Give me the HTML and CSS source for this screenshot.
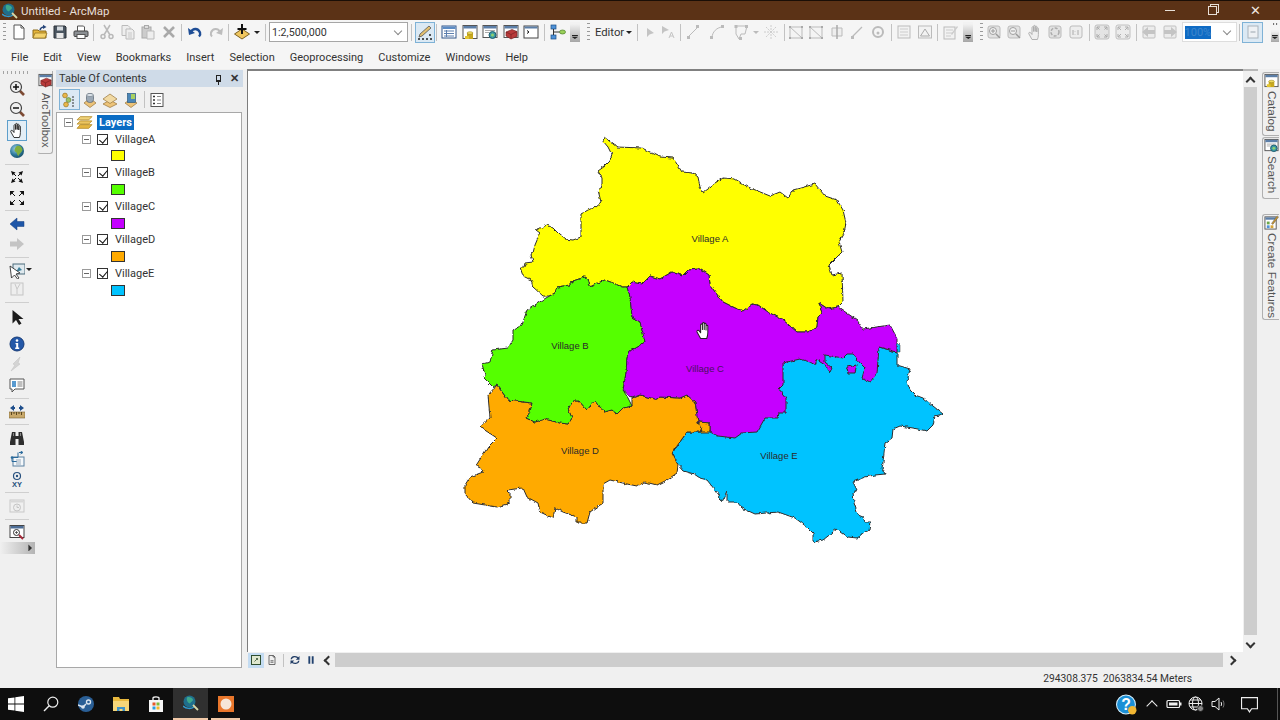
FILE: index.html
```html
<!DOCTYPE html>
<html lang="en">
<head>
<meta charset="utf-8">
<title>Untitled - ArcMap</title>
<link rel="stylesheet" href="styles.css">
</head>
<body>
<svg class="defs" width="0" height="0" aria-hidden="true">
<defs>
<filter id="rough" x="-5%" y="-5%" width="110%" height="110%"><feTurbulence type="fractalNoise" baseFrequency=".22" numOctaves="2" seed="4" result="n"/><feDisplacementMap in="SourceGraphic" in2="n" scale="3.5" xChannelSelector="R" yChannelSelector="G"/></filter>
<radialGradient id="gGlobe" cx=".4" cy=".35" r=".7"><stop offset="0" stop-color="#9fd0e8"/><stop offset=".6" stop-color="#2d7a9c"/><stop offset="1" stop-color="#174d66"/></radialGradient>
<symbol id="new" viewBox="0 0 16 16"><path d="M3 1h7l3 3v11H3z" fill="#fff" stroke="#555"/><path d="M10 1v3h3" fill="none" stroke="#555"/></symbol>
<symbol id="open" viewBox="0 0 16 16"><path d="M1 6h5l1 1h7v7H1z" fill="#e6b53a" stroke="#8a6a1a"/><path d="M1 14l2-5h12l-2 5z" fill="#f4d36c" stroke="#8a6a1a" stroke-width=".7"/><path d="M8 6c.5-2 2-3 4-3" fill="none" stroke="#27467a" stroke-width="1.4"/><path d="M11 .8l3.5 2.2-3.5 2z" fill="#27467a"/></symbol>
<symbol id="save" viewBox="0 0 16 16"><path d="M2 2h11l1 1v11H2z" fill="#4a5560" stroke="#2c3238"/><rect x="5" y="2.500" width="6" height="4" fill="#d5dbe0"/><rect x="4.500" y="9" width="7" height="5" fill="#e8e8e8"/></symbol>
<symbol id="print" viewBox="0 0 16 16"><path d="M4.500 7V2h6l1 1v4" fill="#fff" stroke="#555"/><rect x="1" y="7" width="14" height="5.500" rx="1" fill="#8b8f93" stroke="#444"/><rect x="4" y="10.500" width="8" height="4" fill="#fff" stroke="#555"/></symbol>
<symbol id="cut" viewBox="0 0 16 16"><g fill="none" stroke="#b9b9b9" stroke-width="1.500"><circle cx="4" cy="12.500" r="2"/><circle cx="12" cy="12.500" r="2"/><path d="M5 11l6-10M11 11L5 1"/></g></symbol>
<symbol id="copy" viewBox="0 0 16 16"><g fill="#eee" stroke="#bbb"><path d="M2 1.500h6l2 2v8H2z"/><path d="M6 5h6l2 2v8H6z"/></g><path d="M8 9h4M8 11h4M8 13h4" stroke="#c8c8c8"/></symbol>
<symbol id="paste" viewBox="0 0 16 16"><rect x="2" y="3" width="9" height="11" fill="#ccc" stroke="#aaa"/><rect x="4.500" y="1.500" width="4" height="3" fill="#ddd" stroke="#aaa"/><path d="M7 7h7v8H7z" fill="#eee" stroke="#bbb"/></symbol>
<symbol id="del" viewBox="0 0 16 16"><path d="M3 3l10 10M13 3L3 13" stroke="#a9a9a9" stroke-width="2.600"/></symbol>
<symbol id="undo" viewBox="0 0 16 16"><path d="M4 8c2-4 7-4 9 .5 .5 1.500 0 3-1 4" fill="none" stroke="#1f4e96" stroke-width="2.400"/><path d="M1 4l1 7 6-2z" fill="#1f4e96"/></symbol>
<symbol id="redo" viewBox="0 0 16 16"><path d="M12 8c-2-4-7-4-9 .5-.5 1.500 0 3 1 4" fill="none" stroke="#bdbdbd" stroke-width="2"/><path d="M15 4l-1 7-6-2z" fill="#bdbdbd"/></symbol>
<symbol id="add" viewBox="0 0 16 16"><path d="M8 5l7.500 5L8 15 .5 10z" fill="#efc65f" stroke="#7d6020"/><path d="M8 0v10M3.500 5h9" stroke="#111" stroke-width="2"/></symbol>
<symbol id="edit" viewBox="0 0 16 16"><path d="M3 10l9-8 2 2-9 8-3 1z" fill="#e3c070" stroke="#555" stroke-width=".8"/><path d="M1 15h2M5 15h2M9 15h2M13 15h2M12 11h2" stroke="#222" stroke-width="1.600"/></symbol>
<symbol id="table" viewBox="0 0 16 16"><rect x="1" y="2" width="14" height="12" fill="#fff" stroke="#33578a"/><rect x="1.500" y="2.500" width="13" height="2.500" fill="#5d8cc4"/><path d="M3 7h10M3 9.500h10M3 12h10M5.500 6v7" stroke="#5d7fae"/></symbol>
<symbol id="catalog" viewBox="0 0 16 16"><rect x="1" y="1.500" width="14" height="13" fill="#fff" stroke="#555"/><rect x="1.500" y="2" width="13" height="2.500" fill="#5c7fa8"/><path d="M5 9h6v6H5z" fill="#c8a81e"/><ellipse cx="8" cy="9" rx="3" ry="1.300" fill="#f0dc5c" stroke="#8a7414" stroke-width=".5"/><path d="M3 12h4v3H3z" fill="#e2c530"/></symbol>
<symbol id="search" viewBox="0 0 16 16"><rect x="1" y="1.500" width="14" height="12" fill="#fff" stroke="#555"/><rect x="1.500" y="2" width="13" height="2.500" fill="#5c7fa8"/><path d="M3 6.500h10M3 8.500h4" stroke="#aaa"/><circle cx="10.500" cy="11" r="3.500" fill="#3c9aa4" stroke="#1d5c70"/><circle cx="10.500" cy="11" r="1.500" fill="#8fd16e"/></symbol>
<symbol id="toolbox" viewBox="0 0 16 16"><rect x="1" y="1.500" width="14" height="12" fill="#fff" stroke="#555"/><rect x="1.500" y="2" width="13" height="2.500" fill="#5c7fa8"/><path d="M3 8l6-2.500 5 2v5l-6 2.500-5-3z" fill="#b83a3a" stroke="#6e1f1f" stroke-width=".6"/><path d="M3 8l5 2.500 6-3M8 10.500V15" fill="none" stroke="#6e1f1f" stroke-width=".6"/></symbol>
<symbol id="python" viewBox="0 0 16 16"><rect x="1" y="2" width="14" height="12" fill="#fff" stroke="#444"/><rect x="1.500" y="2.500" width="13" height="2" fill="#5c7fa8"/><path d="M4 6.500l2 1.500-2 1.500" fill="none" stroke="#111"/></symbol>
<symbol id="model" viewBox="0 0 16 16"><rect x="1" y="1" width="5" height="4" fill="#4f92d8" stroke="#1c4f86" stroke-width=".7"/><rect x="1" y="11" width="5" height="4" fill="#4f92d8" stroke="#1c4f86" stroke-width=".7"/><ellipse cx="12.500" cy="8" rx="3" ry="2" fill="#9ad05a" stroke="#4c7f28" stroke-width=".7"/><path d="M3.500 5v6M3.500 8h6" stroke="#333"/></symbol>
<symbol id="earrow" viewBox="0 0 16 16"><path d="M5 4v9l2.500-2.500L12 9z" fill="#c4c4c4"/></symbol>
<symbol id="earrowa" viewBox="0 0 16 16"><path d="M1 2v8l2.500-2.500L8 6z" fill="#c4c4c4"/><path d="M8 14l2.500-6 2.500 6M9 12h3" fill="none" stroke="#c4c4c4"/></symbol>
<symbol id="sketch" viewBox="0 0 16 16"><path d="M3 13L13 3" stroke="#bbb"/><path d="M2 12h3v3H2zM11 1h3v3h-3z" fill="#bbb"/></symbol>
<symbol id="curve" viewBox="0 0 16 16"><path d="M3 14C3 8 8 3 14 3" fill="none" stroke="#bbb"/><path d="M1 12h3v3H1zM12 1h3v3h-3z" fill="#bbb"/></symbol>
<symbol id="poly" viewBox="0 0 16 16"><path d="M3 2h11l-2 8H8l-2 5-3-5z" fill="none" stroke="#bbb"/><path d="M1.500 1h3v3h-3zM12 1h3v3h-3zM6 13h3v3H6z" fill="#bbb"/></symbol>
<symbol id="star" viewBox="0 0 16 16"><path d="M8 1v14M1 8h14M3 3l10 10M13 3L3 13" stroke="#ccc" stroke-dasharray="2 1"/></symbol>
<symbol id="rect" viewBox="0 0 16 16"><path d="M2 3h12v11H2zM2 3l12 11" fill="#f4f4f4" stroke="#bbb"/><path d="M1 2h2v2H1zM13 2h2v2h-2zM1 13h2v2H1zM13 13h2v2h-2z" fill="#aaa"/></symbol>
<symbol id="cross" viewBox="0 0 16 16"><path d="M3 4h10v8H3z" fill="#eee" stroke="#bbb"/><path d="M8 1v14" stroke="#aaa" stroke-width="1.500"/></symbol>
<symbol id="slash" viewBox="0 0 16 16"><path d="M3 13L13 3" stroke="#bbb" stroke-width="1.300"/><path d="M2 12h3v3H2z" fill="#bbb"/></symbol>
<symbol id="rot" viewBox="0 0 16 16"><circle cx="8" cy="8" r="5" fill="none" stroke="#bbb" stroke-width="2"/><circle cx="8" cy="9" r="1.500" fill="#bbb"/></symbol>
<symbol id="attr" viewBox="0 0 16 16"><rect x="2" y="2" width="12" height="12" fill="#f2f2f2" stroke="#bbb"/><path d="M4 5h8M4 8h8M4 11h8" stroke="#ccc"/></symbol>
<symbol id="pyr" viewBox="0 0 16 16"><rect x="1.500" y="2" width="13" height="12" fill="#f2f2f2" stroke="#bbb"/><path d="M3.500 12L8 5l4.500 7z" fill="none" stroke="#aaa"/></symbol>
<symbol id="note" viewBox="0 0 16 16"><rect x="1" y="3" width="11" height="12" fill="#f2f2f2" stroke="#bbb"/><path d="M3 6h7M3 9h7M3 12h5" stroke="#ccc"/><path d="M8 10l6-8 1 1-6 8z" fill="#ccc"/></symbol>
<symbol id="create" viewBox="0 0 16 16"><rect x="1" y="2" width="12" height="13" fill="#fff" stroke="#555"/><rect x="1.500" y="2.500" width="11" height="2.500" fill="#5c7fa8"/><path d="M3 7h3v3H3z" fill="#6ba84a"/><path d="M7 11h3v3H7z" fill="#d6a53a"/><path d="M3 11h3v3H3z" fill="#4f92d8"/><path d="M8 9l6-8 1.500 1-6 8z" fill="#c9962f" stroke="#555" stroke-width=".5"/></symbol>
<symbol id="layin" viewBox="0 0 16 16"><rect x="2" y="2" width="12" height="12" rx="2" fill="#e2e2e2" stroke="#bbb"/><circle cx="7" cy="7" r="3.500" fill="#f2f2f2" stroke="#a0a0a0"/><path d="M5 7h4M7 5v4" stroke="#999"/><path d="M10 10l4 4" stroke="#999" stroke-width="1.500"/></symbol>
<symbol id="layout" viewBox="0 0 16 16"><rect x="2" y="2" width="12" height="12" rx="2" fill="#e2e2e2" stroke="#bbb"/><circle cx="7" cy="7" r="3.500" fill="#f2f2f2" stroke="#a0a0a0"/><path d="M5 7h4" stroke="#999"/><path d="M10 10l4 4" stroke="#999" stroke-width="1.500"/></symbol>
<symbol id="hand" viewBox="0 0 16 16"><path d="M5 15.500L1.800 9.800C1.200 8.600 2.800 7.700 3.700 8.800L5 10.500V3.500C5 2.400 6.600 2.400 6.600 3.500V7.500V2.200C6.600 1.100 8.200 1.100 8.200 2.200V7.500V2.800C8.200 1.700 9.800 1.700 9.800 2.800V8V4.500C9.800 3.500 11.400 3.500 11.400 4.500V10.500C11.400 12.500 11 14 10.400 15.500z" fill="#fff" stroke="#222" stroke-width=".9" stroke-linejoin="round"/></symbol>
<symbol id="handg" viewBox="0 0 16 16"><path d="M5 15.500L1.800 9.800C1.200 8.600 2.800 7.700 3.700 8.800L5 10.500V3.500C5 2.400 6.600 2.400 6.600 3.500V7.500V2.200C6.600 1.100 8.200 1.100 8.200 2.200V7.500V2.800C8.200 1.700 9.800 1.700 9.800 2.800V8V4.500C9.800 3.500 11.400 3.500 11.400 4.500V10.500C11.400 12.500 11 14 10.400 15.500z" fill="#efefef" stroke="#aaa" stroke-width=".9"/></symbol>
<symbol id="rotg" viewBox="0 0 16 16"><rect x="2" y="2" width="12" height="12" rx="2" fill="#e2e2e2" stroke="#bbb"/><circle cx="8" cy="8" r="4" fill="none" stroke="#aaa" stroke-width="1.500" stroke-dasharray="3 1.500"/></symbol>
<symbol id="one" viewBox="0 0 16 16"><rect x="2" y="2" width="12" height="12" rx="2" fill="#ededed" stroke="#bbb"/><path d="M5 6v5M7 7.500v.5M7 10v.5M10 6v5" stroke="#aaa"/></symbol>
<symbol id="fin" viewBox="0 0 16 16"><rect x="1" y="1" width="14" height="14" rx="2" fill="#e4e4e4" stroke="#c0c0c0"/><path d="M3 3l2.500 2.500M3 6V3h3M13 3l-2.500 2.500M13 6V3h-3M3 13l2.500-2.500M3 10v3h3M13 13l-2.500-2.500M13 10v3h-3" fill="none" stroke="#aaa"/></symbol>
<symbol id="fout" viewBox="0 0 16 16"><rect x="1" y="1" width="14" height="14" rx="2" fill="#ececec" stroke="#c0c0c0"/><path d="M6 6L3 3M3 6V3h3M10 6l3-3M13 6V3h-3M6 10l-3 3M3 10v3h3M10 10l3 3M13 10v3h-3" fill="none" stroke="#b0b0b0"/></symbol>
<symbol id="bkg" viewBox="0 0 16 16"><rect x="2" y="2" width="12" height="12" rx="1" fill="#ececec" stroke="#c0c0c0"/><path d="M1 8l6-5v3h7v4H7v3z" fill="#c4c4c4"/></symbol>
<symbol id="fwg" viewBox="0 0 16 16"><rect x="2" y="2" width="12" height="12" rx="1" fill="#ececec" stroke="#c0c0c0"/><path d="M15 8L9 3v3H2v4h7v3z" fill="#c4c4c4"/></symbol>
<symbol id="page" viewBox="0 0 16 16"><rect x="3" y="2" width="10" height="12" fill="#eef1f4" stroke="#a9b3bc"/><path d="M5.500 8h5" stroke="#9aa5ae"/></symbol>
<symbol id="dots" viewBox="0 0 16 16"><path d="M4 2l3 2-3 2zM10 2l3 2-3 2z" fill="#333"/></symbol>
<symbol id="zin" viewBox="0 0 16 16"><path d="M10 10l5 5" stroke="#7d4a33" stroke-width="2.600"/><circle cx="7" cy="7" r="5.500" fill="#efefef" stroke="#444" stroke-width="1.200"/><path d="M4 7h6M7 4v6" stroke="#111" stroke-width="1.500"/></symbol>
<symbol id="zout" viewBox="0 0 16 16"><path d="M10 10l5 5" stroke="#7d4a33" stroke-width="2.600"/><circle cx="7" cy="7" r="5.500" fill="#efefef" stroke="#444" stroke-width="1.200"/><path d="M4 7h6" stroke="#111" stroke-width="1.500"/></symbol>
<symbol id="globe" viewBox="0 0 16 16"><circle cx="8" cy="8" r="7" fill="url(#gGlobe)"/><path d="M8 3c3-1 5 1 5.500 4-1 3-3 3-4 6-2-1-1-3-2.500-4-2 0-2-4 1-6z" fill="#7fae3d"/></symbol>
<symbol id="cin" viewBox="0 0 16 16"><path d="M2 2l4.500 1.500L3.500 6.500zM14 2l-1.500 4.500-3-3zM2 14l1.500-4.500 3 3zM14 14l-4.500-1.500 3-3z" fill="#111"/><path d="M7 7L4 4M9 7l3-3M7 9l-3 3M9 9l3 3" stroke="#111"/></symbol>
<symbol id="cout" viewBox="0 0 16 16"><path d="M1 1h4.500L1 5.500zM15 1v4.500L10.500 1zM1 15v-4.500L5.500 15zM15 15h-4.500L15 10.500z" fill="#111"/><path d="M3 3l3 3M13 3l-3 3M3 13l3-3M13 13l-3-3" stroke="#111"/></symbol>
<symbol id="back" viewBox="0 0 16 16"><path d="M1 8l7-6v3.500h7v5H8V14z" fill="#1e56a8" stroke="#163f7c" stroke-width=".5"/></symbol>
<symbol id="fwd" viewBox="0 0 16 16"><path d="M15 8L8 2v3.500H1v5h7V14z" fill="#c4c4c4"/></symbol>
<symbol id="selel" viewBox="0 0 16 16"><rect x="4" y="1" width="12" height="10" fill="#dfe9ee" stroke="#4a6a7a"/><path d="M7 9l3-5 3 3" fill="#3d7f9a"/><path d="M1 3l1.500 12 3-3 3 4 1.500-1-3-4 4-1z" fill="#fff" stroke="#333" stroke-width=".9"/></symbol>
<symbol id="clr" viewBox="0 0 16 16"><rect x="2" y="2" width="12" height="12" fill="#eee" stroke="#c4c4c4"/><path d="M6 3l2 5 3-5M8 8v5" stroke="#c8c8c8" fill="none"/></symbol>
<symbol id="arrow" viewBox="0 0 16 16"><path d="M3.500 1v13.500l3.500-3.500 3 5 2.500-1.500-3-4.500h5z" fill="#1c1c1c"/></symbol>
<symbol id="info" viewBox="0 0 16 16"><circle cx="8" cy="8" r="7" fill="#2458a8" stroke="#173c78"/><circle cx="8" cy="4.500" r="1.300" fill="#fff"/><path d="M6.500 7h2.700v4.500h1V13h-4v-1.500h1V8.300h-.7z" fill="#fff"/></symbol>
<symbol id="flash" viewBox="0 0 16 16"><path d="M11 1L4 8l2 1-4 6 9-7-2-1z" fill="#d4d4d4" stroke="#c4c4c4" stroke-width=".6"/></symbol>
<symbol id="popup" viewBox="0 0 16 16"><path d="M1 2h14v10H6l-3 3v-3H1z" fill="#fff" stroke="#555"/><rect x="3" y="4" width="4" height="6" fill="#5a9bd0"/><path d="M8.500 5h5M8.500 7h5M8.500 9h5" stroke="#7f7f7f"/></symbol>
<symbol id="measure" viewBox="0 0 16 16"><rect x="0" y="9" width="16" height="6" fill="#c8a86a" stroke="#7a6233" stroke-width=".6"/><path d="M2.500 9v3M5 9v2M7.500 9v3M10 9v2M12.500 9v3" stroke="#5a4620"/><path d="M1 5l4-3v2h1v2H5v2zM15 5l-4-3v2h-1v2h1v2z" fill="#1f4f8c"/></symbol>
<symbol id="find" viewBox="0 0 16 16"><path d="M3 2h3.500v4h3V2H13l2 10v3H9.500V9h-3v6H1v-3z" fill="#2e2e2e"/><path d="M4 3h1v3H4zM11 3h1v3h-1z" fill="#888"/></symbol>
<symbol id="route" viewBox="0 0 16 16"><rect x="4" y="6" width="11" height="9" fill="#f4f8fb" stroke="#5a80a0"/><path d="M10 1.500h3M11.500 0l2.500 1.500L11.500 3M9 1.500v5H3v4h5" fill="none" stroke="#2a6a9c"/><circle cx="3" cy="6.500" r="1.300" fill="#2a6a9c"/><path d="M7 9h5M7 11h5M7 13h5" stroke="#9ab"/></symbol>
<symbol id="goxy" viewBox="0 0 16 16"><circle cx="8" cy="5" r="3.500" fill="none" stroke="#27507e" stroke-width="1.200"/><circle cx="8" cy="5" r="1.200" fill="#27507e"/><text x="8" y="15.500" text-anchor="middle" class="xy">XY</text></symbol>
<symbol id="time" viewBox="0 0 16 16"><rect x="1" y="2" width="14" height="12" fill="#f0f0f0" stroke="#c8c8c8"/><rect x="1.500" y="2.500" width="13" height="2" fill="#d8d8d8"/><circle cx="8" cy="9.500" r="3.500" fill="#eee" stroke="#c4c4c4"/><path d="M8 7.500v2h2" stroke="#c4c4c4" fill="none"/></symbol>
<symbol id="viewer" viewBox="0 0 16 16"><rect x="1" y="1.500" width="14" height="12" fill="#fff" stroke="#444"/><rect x="1.500" y="2" width="13" height="2.500" fill="#4d6d96"/><circle cx="7.500" cy="8.500" r="3" fill="#fff" stroke="#333"/><path d="M6 8.500h3M7.500 7v3" stroke="#333" stroke-width=".7"/><path d="M10 11l4 4" stroke="#a52a3a" stroke-width="2"/></symbol>
<symbol id="tocl" viewBox="0 0 16 16"><circle cx="4" cy="3.500" r="2.400" fill="#e9b64b" stroke="#8a6a1a" stroke-width=".6"/><circle cx="7.500" cy="8" r="2.400" fill="#9cc268" stroke="#587a2c" stroke-width=".6"/><circle cx="5" cy="12.500" r="2.400" fill="#e9b64b" stroke="#8a6a1a" stroke-width=".6"/><path d="M11 5h3M11 8h3M11 11h3M11 14h3" stroke="#333" stroke-width="1.200" stroke-dasharray="2 1"/></symbol>
<symbol id="tocs" viewBox="0 0 16 16"><path d="M2 11l6 4.500 6-4.500-2.500-2h-7z" fill="#edc378" stroke="#96733a" stroke-width=".7"/><rect x="4.500" y="1.500" width="7" height="9" rx="3" fill="#9aa7b4" stroke="#56626e" stroke-width=".7"/><ellipse cx="8" cy="3" rx="3.300" ry="1.500" fill="#dfe6ec" stroke="#56626e" stroke-width=".5"/></symbol>
<symbol id="tocv" viewBox="0 0 16 16"><path d="M8 8l7 4-7 3.500L1 12z" fill="#edc378" stroke="#96733a" stroke-width=".7"/><path d="M8 2l7 5-7 4.500L1 7z" fill="#f1d9a2" stroke="#96733a" stroke-width=".7"/></symbol>
<symbol id="tocx" viewBox="0 0 16 16"><path d="M2 11l6 4.500 6-4.500-3-2H5z" fill="#edc378" stroke="#96733a" stroke-width=".7"/><rect x="4.500" y="1.500" width="8" height="9" fill="#4a86b8" stroke="#2c5a80" stroke-width=".7"/><path d="M8 2h4v5H8z" fill="#a8d060"/></symbol>
<symbol id="tocp" viewBox="0 0 16 16"><rect x="2" y="1.500" width="12" height="13" fill="#fff" stroke="#555"/><path d="M4 4.500h2M4 8h2M4 11.500h2" stroke="#333" stroke-width="1.400"/><path d="M8 4.500h4M8 8h4M8 11.500h4" stroke="#888"/></symbol>
<symbol id="layers" viewBox="0 0 16 16"><path d="M4 2.500h11l-3 3H1z" fill="#f0d37a" stroke="#b68e2c" stroke-width=".8"/><path d="M4 6.500h11l-3 3H1z" fill="#ecc561" stroke="#b68e2c" stroke-width=".8"/><path d="M4 10h11l-3 3.500H1z" fill="#e5b640" stroke="#b68e2c" stroke-width=".8"/></symbol>
<symbol id="vlay" viewBox="0 0 16 16"><rect x="2" y="2" width="12" height="12" fill="#dfe8cf" stroke="#2c4a2c" stroke-width="1.300"/><path d="M10 6L6 10M8 6h2v2" stroke="#2c4a2c" fill="none"/></symbol>
<symbol id="vdat" viewBox="0 0 16 16"><path d="M4 2h6l2 2v10H4z" fill="#f0f0f0" stroke="#444"/><path d="M6 9h4M6 11h4M9.500 2v2H12" stroke="#444" fill="none"/></symbol>
<symbol id="refresh" viewBox="0 0 16 16"><path d="M3 7c.5-4 7-5 9.500-1M13 9c-.5 4-7 5-9.500 1" fill="none" stroke="#223e66" stroke-width="1.800"/><path d="M14 2.500v5h-5zM2 13.500v-5h5z" fill="#223e66"/></symbol>
<symbol id="pause" viewBox="0 0 16 16"><path d="M4.500 3h2.500v10H4.500zM9 3h2.500v10H9z" fill="#20416e"/></symbol>
<symbol id="winlogo" viewBox="0 0 16 16"><path d="M0 2.300l6.500-.9v6.200H0zM7.300 1.300L16 0v7.600H7.300zM0 8.400h6.500v6.200L0 13.700zM7.300 8.400H16V16l-8.700-1.300z" fill="#fff"/></symbol>
<symbol id="tsearch" viewBox="0 0 16 16"><circle cx="9.800" cy="6.200" r="5" fill="none" stroke="#eee" stroke-width="1.200"/><path d="M6.200 9.800L1 15" stroke="#eee" stroke-width="1.400"/></symbol>
<symbol id="steam" viewBox="0 0 16 16"><circle cx="8" cy="8" r="8" fill="#2a5f96"/><circle cx="10.500" cy="6" r="2.700" fill="#dce6f0"/><circle cx="10.500" cy="6" r="1.300" fill="#2a5f96"/><path d="M0 9l5 2 3-3" stroke="#dce6f0" stroke-width="1.500" fill="none"/><circle cx="5" cy="11" r="1.800" fill="#dce6f0"/></symbol>
<symbol id="folder" viewBox="0 0 16 16"><path d="M0 1h6l1 2h9v12H0z" fill="#e9b93e"/><path d="M0 5h16v10H0z" fill="#f5d679"/><path d="M4 11h8v4H9.500v-2h-3v2H4z" fill="#3d93c9"/></symbol>
<symbol id="store" viewBox="0 0 16 16"><path d="M1 4h14v12H1z" fill="#f6f6f6"/><path d="M5 5V2c0-1.500 6-1.500 6 0v3" fill="none" stroke="#f6f6f6" stroke-width="1.300"/><path d="M4.500 6.500h3v3h-3z" fill="#e5592a"/><path d="M8.500 6.500h3v3h-3z" fill="#7fba3a"/><path d="M4.500 10.500h3v3h-3z" fill="#2a9de0"/><path d="M8.500 10.500h3v3h-3z" fill="#f5b92a"/></symbol>
<symbol id="arc" viewBox="0 0 16 16"><circle cx="6.500" cy="6.500" r="6" fill="#1f6e8c"/><path d="M4 2.500c2-1 5 0 6 2 0 2-2 2-3 4-2 0-4-4-3-6z" fill="#3ea88c"/><path d="M0 11c3 3 8 3 11 1" fill="none" stroke="#2f9ad0" stroke-width="1.500"/><path d="M10 10l5 5" stroke="#d8d8a8" stroke-width="1.800"/></symbol>
<symbol id="orange" viewBox="0 0 16 16"><rect x="0" y="0" width="16" height="16" fill="#e9762b"/><circle cx="8" cy="8" r="5.500" fill="#f6e6d8"/></symbol>
<symbol id="help" viewBox="0 0 20 20"><circle cx="9.500" cy="10" r="9" fill="#1b8fd6" stroke="#d6eefa"/><text x="9.500" y="15.500" text-anchor="middle" class="qmark">?</text><circle cx="15.500" cy="15.500" r="4" fill="#f2b733"/></symbol>
<symbol id="batt" viewBox="0 0 16 16"><rect x="1" y="4.500" width="12.500" height="7" rx="1" fill="none" stroke="#eee" stroke-width="1.200"/><rect x="3" y="6.500" width="8.500" height="3" fill="#eee"/><rect x="14" y="6.500" width="1.500" height="3" fill="#eee"/></symbol>
<symbol id="netg" viewBox="0 0 16 16"><g fill="none" stroke="#eee"><circle cx="7.500" cy="7.500" r="6.500"/><ellipse cx="7.500" cy="7.500" rx="3" ry="6.500"/><path d="M1 7.500h13M2 4h11M2 11h11"/></g><circle cx="12.500" cy="12.500" r="3" fill="#888" stroke="#111" stroke-width=".8"/></symbol>
<symbol id="spk" viewBox="0 0 16 16"><path d="M2 5.500h3L9 2v12l-4-3.500H2z" fill="none" stroke="#eee"/><path d="M11 6c.7 1 .7 3 0 4" fill="none" stroke="#eee"/><path d="M13 4.500c1.300 2 1.300 5 0 7" fill="none" stroke="#777"/></symbol>
<symbol id="notif" viewBox="0 0 16 16"><path d="M.5 1.500h15v10.500H10l-2 3-2-3H.5z" fill="none" stroke="#eee" stroke-width="1.100"/></symbol>
</defs>
</svg>

<div class="app">
<header class="titlebar">
  <svg class="title-ic"><use href="#arc"/></svg>
  <span class="title-text">Untitled - ArcMap</span>
  <div class="wincontrols">
    <span class="wc"><span class="wc-min"></span></span>
    <span class="wc"><span class="wc-max"></span></span>
    <span class="wc wc-x">✕</span>
  </div>
</header>

<div class="toolbar">
  <span class="grip g1"></span>
  <span class="btn"><svg><use href="#new"/></svg></span>
  <span class="btn"><svg><use href="#open"/></svg></span>
  <span class="btn"><svg><use href="#save"/></svg></span>
  <span class="btn"><svg><use href="#print"/></svg></span>
  <i class="sep"></i>
  <span class="btn"><svg><use href="#cut"/></svg></span>
  <span class="btn"><svg><use href="#copy"/></svg></span>
  <span class="btn"><svg><use href="#paste"/></svg></span>
  <span class="btn"><svg><use href="#del"/></svg></span>
  <i class="sep"></i>
  <span class="btn"><svg><use href="#undo"/></svg></span>
  <span class="btn"><svg><use href="#redo"/></svg></span>
  <i class="sep"></i>
  <span class="btn"><svg><use href="#add"/></svg></span>
  <span class="caret"></span>
  <i class="sep"></i>
  <span class="combo scale"><span>1:2,500,000</span><b class="vee"></b></span>
  <i class="sep"></i>
  <span class="btn on"><svg><use href="#edit"/></svg></span>
  <i class="sep s2"></i>
  <span class="btn"><svg><use href="#table"/></svg></span>
  <span class="btn"><svg><use href="#catalog"/></svg></span>
  <span class="btn"><svg><use href="#search"/></svg></span>
  <span class="btn"><svg><use href="#toolbox"/></svg></span>
  <span class="btn"><svg><use href="#python"/></svg></span>
  <i class="sep"></i>
  <span class="btn"><svg><use href="#model"/></svg></span>
  <span class="chev c2"></span>
  <span class="grip g2"></span>
  <span class="editor">Editor</span><span class="caret"></span>
  <i class="sep"></i>
  <span class="btn"><svg><use href="#earrow"/></svg></span>
  <span class="btn b17"><svg><use href="#earrowa"/></svg></span>
  <i class="sep"></i>
  <span class="btn"><svg><use href="#sketch"/></svg></span>
  <span class="btn m3"><svg><use href="#curve"/></svg></span>
  <span class="btn m3"><svg><use href="#poly"/></svg></span>
  <span class="caret dimc"></span>
  <span class="btn"><svg><use href="#star"/></svg></span>
  <i class="sep"></i>
  <span class="btn mn2"><svg><use href="#rect"/></svg></span>
  <span class="btn"><svg><use href="#rect"/></svg></span>
  <span class="btn"><svg><use href="#cross"/></svg></span>
  <span class="btn"><svg><use href="#slash"/></svg></span>
  <span class="btn"><svg><use href="#rot"/></svg></span>
  <i class="sep"></i>
  <span class="btn"><svg><use href="#attr"/></svg></span>
  <span class="btn"><svg><use href="#pyr"/></svg></span>
  <i class="sep"></i>
  <span class="btn"><svg><use href="#note"/></svg></span>
  <span class="chev c2"></span>
  <span class="grip g3"></span>
  <span class="btn"><svg><use href="#layin"/></svg></span>
  <span class="btn"><svg><use href="#layout"/></svg></span>
  <span class="btn"><svg><use href="#handg"/></svg></span>
  <span class="btn"><svg><use href="#rotg"/></svg></span>
  <span class="btn"><svg><use href="#one"/></svg></span>
  <i class="sep"></i>
  <span class="btn"><svg><use href="#fin"/></svg></span>
  <span class="btn"><svg><use href="#fout"/></svg></span>
  <i class="sep"></i>
  <span class="btn"><svg><use href="#bkg"/></svg></span>
  <span class="btn"><svg><use href="#fwg"/></svg></span>
  <span class="combo pct"><span class="pct-val">100%</span><b class="vee"></b></span>
  <i class="sep"></i>
  <span class="btn on"><svg><use href="#page"/></svg></span>
  <span class="chev-end"><svg><use href="#dots"/></svg><span class="chev small"></span></span>
</div>

<nav class="menubar">
  <span class="menu">File</span>
  <span class="menu">Edit</span>
  <span class="menu">View</span>
  <span class="menu">Bookmarks</span>
  <span class="menu">Insert</span>
  <span class="menu">Selection</span>
  <span class="menu">Geoprocessing</span>
  <span class="menu">Customize</span>
  <span class="menu">Windows</span>
  <span class="menu">Help</span>
</nav>

<main class="workspace">
  <div class="main-row">
    <aside class="tools">
      <span class="tgrip"></span>
      <span class="tool"><svg><use href="#zin"/></svg></span>
      <span class="tool"><svg><use href="#zout"/></svg></span>
      <span class="tool on mt1"><svg><use href="#hand"/></svg></span>
      <span class="tool"><svg><use href="#globe"/></svg></span>
      <i class="hsep"></i>
      <span class="tool"><svg><use href="#cin"/></svg></span>
      <span class="tool"><svg><use href="#cout"/></svg></span>
      <i class="hsep"></i>
      <span class="tool"><svg><use href="#back"/></svg></span>
      <span class="tool"><svg><use href="#fwd"/></svg></span>
      <i class="hsep"></i>
      <span class="tool"><svg><use href="#selel"/></svg><span class="caret tc"></span></span>
      <span class="tool t-s"><svg><use href="#clr"/></svg></span>
      <i class="hsep"></i>
      <span class="tool mt2"><svg><use href="#arrow"/></svg></span>
      <span class="tool t-b"><svg><use href="#info"/></svg></span>
      <span class="tool"><svg><use href="#flash"/></svg></span>
      <span class="tool"><svg><use href="#popup"/></svg></span>
      <i class="hsep"></i>
      <span class="tool"><svg><use href="#measure"/></svg></span>
      <i class="hsep"></i>
      <span class="tool mt1"><svg><use href="#find"/></svg></span>
      <span class="tool"><svg><use href="#route"/></svg></span>
      <span class="tool"><svg><use href="#goxy"/></svg></span>
      <i class="hsep"></i>
      <span class="tool mt1"><svg><use href="#time"/></svg></span>
      <i class="hsep"></i>
      <span class="tool mtn1"><svg><use href="#viewer"/></svg></span>
      <span class="tools-end"><span class="tri"></span></span>
    </aside>

    <div class="sidetab toolbox-tab">
      <svg><use href="#toolbox"/></svg>
      <span class="vtext">ArcToolbox</span>
    </div>

    <section class="toc">
      <div class="toc-head"><span>Table Of Contents</span><span class="pin"></span><span class="toc-x">✕</span></div>
      <div class="toc-bar">
        <span class="btn on"><svg><use href="#tocl"/></svg></span>
        <span class="btn"><svg><use href="#tocs"/></svg></span>
        <span class="btn"><svg><use href="#tocv"/></svg></span>
        <span class="btn"><svg><use href="#tocx"/></svg></span>
        <i class="sep"></i>
        <span class="btn"><svg><use href="#tocp"/></svg></span>
      </div>
      <div class="tree">
        <div class="row root"><span class="exp"></span><svg class="lay"><use href="#layers"/></svg><span class="sel">Layers</span></div>
        <div class="row"><span class="exp"></span><span class="chk"></span><span>VillageA</span></div>
        <div class="row sw"><span class="swatch c-a"></span></div>
        <div class="row"><span class="exp"></span><span class="chk"></span><span>VillageB</span></div>
        <div class="row sw"><span class="swatch c-b"></span></div>
        <div class="row"><span class="exp"></span><span class="chk"></span><span>VillageC</span></div>
        <div class="row sw"><span class="swatch c-c"></span></div>
        <div class="row"><span class="exp"></span><span class="chk"></span><span>VillageD</span></div>
        <div class="row sw"><span class="swatch c-d"></span></div>
        <div class="row"><span class="exp"></span><span class="chk"></span><span>VillageE</span></div>
        <div class="row sw"><span class="swatch c-e"></span></div>
      </div>
    </section>

    <section class="maparea">
      <div class="maptop">
        <div class="frame">
          <svg class="map" viewBox="248 71 995 581">
            <g class="shp" filter="url(#rough)">
              <polygon class="e" points="879,347 897,352 897,365 910,369 907,382 910,390 915,395 923,398 943,414 935,416 933,425 927,431 913,428 900,426 893,429 892,438 885,443 883,462 882,468 885,474 875,475 870,476 865,477 853,482 857,490 853,492 854,503 858,515 863,517 865,522 870,522 869,530 857,538 848,537 837,529 823,540 813,542 813,533 807,527 795,518 778,512 755,514 742,508 737,502 727,502 727,492 722,502 719,495 707,480 700,478 694,474 684,471 677,463 672,453 687,432 700,432 760,415 790,350 879,340"/>
              <polygon class="bl" points="897,342 900,345 900,352 897,352"/>
              <polygon class="a" points="604,137 603,141 608,147 612,155 610,161 605,166 598,171 602,178 602,187 598,190 601,202 595,207 588,210 581,214 581,237 573,240 565,239 560,235 553,228 547,225 536,230 540,233 535,245 533,253 531,254 533,262 525,263 524,267 520,267 523,276 531,280 533,287 543,296 549,296 555,293 557,287 570,285 573,281 585,277 588,279 590,287 598,283 605,280 613,283 622,287 627,287 632,282 642,284 650,276 660,279 672,272 682,276 688,270 700,269 709,275 710,285 715,292 723,302 735,308 743,311 752,304 758,305 768,312 783,320 797,332 808,332 817,327 818,317 822,313 819,303 828,309 838,307 843,302 842,273 832,275 829,265 842,252 839,242 844,233 846,223 843,210 837,200 825,196 815,184 793,190 788,198 780,192 770,196 748,187 735,179 723,178 715,183 703,192 700,187 698,177 693,173 682,172 673,158 660,157 642,148 617,147"/>
              <polygon class="d" points="497,385 488,395 490,418 480,427 497,438 488,447 477,464 483,472 470,477 465,485 465,494 473,503 497,507 510,503 510,493 507,490 523,488 527,497 538,503 540,512 553,518 555,508 563,512 577,517 577,523 587,523 590,512 603,503 603,484 610,480 627,484 637,486 645,482 657,485 667,480 677,473 678,465 672,453 687,432 700,432 702,428 697,412 695,402 687,395 680,398 660,397 655,399 640,395 632,398 632,406 623,408 617,414 612,410 604,412 595,400 587,410 579,401 573,401 568,409 572,418 568,424 560,423 545,419 535,422 526,418 530,412 532,403 508,400"/>
              <polygon class="b" points="546,298 527,310 522,325 513,330 513,340 508,348 493,350 490,362 482,364 485,375 484,378 493,387 497,385 508,400 532,403 530,412 526,418 535,422 545,419 560,423 568,424 572,418 568,409 573,401 579,401 587,410 595,400 604,412 612,410 617,414 623,408 632,406 628,398 623,390 626,373 627,358 630,351 645,342 643,333 640,322 632,317 630,297 627,287 622,287 613,283 605,280 598,283 590,287 588,279 585,277 573,281 570,285 557,287 555,293"/>
              <polygon class="c" points="627,287 632,282 642,284 650,276 660,279 672,272 682,276 688,270 700,269 709,275 710,285 715,292 723,302 735,308 743,311 752,304 758,305 768,312 783,320 797,332 808,332 817,327 818,317 822,313 819,303 828,309 838,307 857,320 863,329 890,325 897,338 897,352 879,347 877,373 870,382 862,378 865,368 860,363 853,354 847,354 843,358 825,355 825,362 832,368 830,372 825,365 817,360 815,365 810,362 800,359 783,363 783,385 779,389 786,398 786,413 779,413 778,418 765,418 757,432 742,433 735,438 718,436 710,432 710,423 698,422 695,402 687,395 680,398 660,397 655,399 640,395 632,398 623,390 626,373 627,358 630,351 645,342 643,333 640,322 632,317 630,297"/>
              <polygon class="c" points="847,367 857,365 855,373 848,373"/>
              <polygon class="d" points="698,422 710,423 710,432 700,432 702,428"/>
            </g>
            <text x="710" y="242" class="lbl">Village A</text>
            <text x="570" y="349" class="lbl">Village B</text>
            <text x="705" y="372" class="lbl lc">Village C</text>
            <text x="580" y="454" class="lbl">Village D</text>
            <text x="779" y="459" class="lbl">Village E</text>
            <use href="#hand" x="695" y="321" width="18" height="18"/>
          </svg>
        </div>
        <div class="vscroll"><span class="arr-up"></span><span class="vthumb"></span><span class="arr-dn"></span></div>
      </div>
      <div class="mapbottom">
        <span class="vbtn on"><svg><use href="#vlay"/></svg></span>
        <span class="vbtn"><svg><use href="#vdat"/></svg></span>
        <i class="sep"></i>
        <span class="vbtn wide"><svg><use href="#refresh"/></svg></span>
        <span class="vbtn"><svg><use href="#pause"/></svg></span>
        <span class="arr-l"></span>
        <span class="hthumb"></span>
        <span class="arr-r"></span>
      </div>
    </section>

    <aside class="righttabs">
      <div class="sidetab r1"><svg><use href="#catalog"/></svg><span class="vtext">Catalog</span></div>
      <div class="sidetab r2"><svg><use href="#search"/></svg><span class="vtext">Search</span></div>
      <div class="sidetab r3"><svg><use href="#create"/></svg><span class="vtext">Create Features</span></div>
    </aside>
  </div>
  <div class="status"><span>294308.375&nbsp; 2063834.54 Meters</span></div>
</main>

<footer class="taskbar">
  <span class="tb"><svg><use href="#winlogo"/></svg></span>
  <span class="tb"><svg><use href="#tsearch"/></svg></span>
  <span class="tb"><svg><use href="#steam"/></svg></span>
  <span class="tb"><svg><use href="#folder"/></svg></span>
  <span class="tb"><svg><use href="#store"/></svg></span>
  <span class="tb active"><svg><use href="#arc"/></svg></span>
  <span class="tb running"><svg><use href="#orange"/></svg></span>
  <div class="tray">
    <svg class="t-help"><use href="#help"/></svg>
    <span class="t-up"></span>
    <svg class="t-i"><use href="#batt"/></svg>
    <svg class="t-i"><use href="#netg"/></svg>
    <svg class="t-i"><use href="#spk"/></svg>
    <svg class="t-n"><use href="#notif"/></svg>
    <i class="t-edge"></i>
  </div>
</footer>
</div>
</body>
</html>
```

FILE: styles.css
```css
* { box-sizing: border-box; }
html, body { margin: 0; padding: 0; }
body { width: 1280px; height: 720px; overflow: hidden; background: #f0f0f0; font-family: Roboto, "Liberation Sans", sans-serif; font-size: 11px; color: #333; }
.defs { position: absolute; }
.app { display: flex; flex-direction: column; height: 720px; }
.titlebar { height: 20px; flex: none; background: #5b3216; border-top: 1px solid #1a0e06; display: flex; align-items: center; color: #e6dfd8; }
.title-ic { width: 16px; height: 16px; margin-left: 2px; }
.title-text { margin-left: 3px; font-size: 11.500px; }
.wincontrols { margin-left: auto; margin-right: 3px; display: flex; }
.wc { width: 43px; display: flex; align-items: center; justify-content: center; height: 19px; }
.wc-min { width: 10px; height: 1px; background: #e8e0d8; }
.wc-max { width: 9px; height: 9px; border: 1px solid #e8e0d8; box-shadow: 2px -2px 0 -1px #5b3216, 2px -2px 0 0 #e8e0d8; }
.wc-x { font-size: 13px; color: #f0e8e0; }

.toolbar { height: 25px; flex: none; background: #f5f5f5; display: flex; align-items: center; padding: 0 0 1px 3px; white-space: nowrap; }
.btn { width: 20.600px; height: 21px; flex: none; display: flex; align-items: center; justify-content: center; }
.btn svg { width: 16px; height: 16px; }
.btn.on { background: #dbe9f4; border: 1px solid #7fb2d6; }
.b17 { width: 17px; }
.m3 { margin-left: 3px; }
.mn2 { margin-left: -2px; }
.sep { width: 1px; height: 17px; margin: 0 2.350px; background: #c2c2c2; flex: none; }
.s2 { margin-left: 1.200px; margin-right: 1.200px; }
.grip { width: 3px; height: 19px; flex: none; background: repeating-linear-gradient(to bottom, #9a9a9a 0 1px, transparent 1px 4px); }
.g1 { margin-right: 2.700px; }
.g2 { margin: 0 5px 0 7px; }
.g3 { margin: 0 0 0 7px; }
.c2 { margin-left: 2px; }
.caret { width: 0; height: 0; margin: 0 2px; border: 3px solid transparent; border-top: 3px solid #222; border-bottom: 0; flex: none; }
.dimc { border-top-color: #bbb; }
.combo { height: 20px; flex: none; background: #fff; border: 1px solid #a6a6a6; display: flex; align-items: center; position: relative; }
.scale { width: 139px; margin: 0 1px; padding-left: 2px; font-size: 10.700px; }
.pct { width: 55px; margin-left: 1.500px; border-color: #ddd; }
.pct-val { background: #0f6bc4; color: #3d86cc; width: 26px; height: 13px; line-height: 13px; margin-left: 2px; }
.vee { position: absolute; right: 6px; top: 5px; width: 6px; height: 6px; border-right: 1px solid #888; border-bottom: 1px solid #888; transform: rotate(45deg); }
.chev { width: 10px; height: 20px; flex: none; background: linear-gradient(#f2f2f2 10%, #a6a6a6); position: relative; }
.chev::after { content: ""; position: absolute; left: 2px; bottom: 3px; width: 6px; height: 4px; background: #222; clip-path: polygon(0 0, 100% 0, 100% 30%, 0 30%, 0 50%, 100% 50%, 50% 100%, 0 50%); }
.chev.small { height: 12px; width: 8px; }
.chev.small::after { left: 1px; }
.chev-end { width: 12px; margin-left: 6px; display: flex; flex-direction: column; align-items: center; flex: none; }
.chev-end svg { width: 10px; height: 8px; }
.editor { font-size: 11.300px; }

.menubar { height: 24px; flex: none; background: #f5f5f5; display: flex; align-items: center; gap: 15px; padding-left: 11px; }

.workspace { flex: 1; min-height: 0; display: flex; flex-direction: column; background: #f0f0f0; }
.main-row { height: 599px; display: flex; flex: none; }
.status { height: 20px; flex: none; display: flex; justify-content: flex-end; align-items: center; padding-right: 88px; font-size: 10.250px; color: #333; }

.tools { width: 34px; flex: none; display: flex; flex-direction: column; align-items: center; padding-top: 2px; }
.tgrip { width: 28px; height: 3px; margin-bottom: 4px; flex: none; background: repeating-linear-gradient(to right, #a4a4a4 0 1px, transparent 1px 4px); }
.tool { width: 20px; height: 20.600px; flex: none; display: flex; align-items: center; justify-content: center; position: relative; }
.tool svg { width: 16px; height: 16px; }
.tool.on { border: 1px solid #5d9ecb; background: #e3eef6; }
.tool.t-b { margin-top: 6px; }
.tool.t-s { margin-top: -2px; }
.mt1 { margin-top: 1px; }
.mt2 { margin-top: 2px; }
.mtn1 { margin-top: -1px; }
.tc { position: absolute; left: 19px; top: 8px; margin: 0; }
.hsep { width: 24px; height: 1px; flex: none; background: #cfcfcf; margin: 2.250px 0; }
.tools-end { width: 35px; height: 12px; align-self: flex-start; flex: none; background: linear-gradient(to right, #f0f0f0, #b4b4b4); display: flex; align-items: center; justify-content: flex-end; padding-right: 3px; }
.tri { width: 6px; height: 7px; background: #333; clip-path: polygon(40% 0, 100% 50%, 40% 100%); }

.sidetab { border: 1px solid #b0b0b0; border-left-color: #ececec; background: #f0f0f0; border-radius: 0 0 3px 3px; display: flex; flex-direction: column; align-items: center; color: #555; flex: none; }
.sidetab svg { width: 15px; height: 15px; flex: none; }
.vtext { writing-mode: vertical-rl; font-family: "Liberation Sans", sans-serif; font-size: 11.800px; line-height: 15px; }
.toolbox-tab { width: 16px; height: 83px; margin: 2px 3px 0 3px; border-top: 0; }
.toolbox-tab svg { margin-top: 2px; }
.toolbox-tab .vtext { margin-top: 5px; font-size: 11px; }

.toc { width: 187px; flex: none; margin-right: 4px; display: flex; flex-direction: column; }
.toc-head { height: 17px; flex: none; margin-top: 1px; background: #cfdbe8; display: flex; align-items: center; padding-left: 3px; }
.pin { margin-left: auto; width: 5px; height: 7px; border: 1px solid #222; border-bottom-width: 2px; position: relative; }
.pin::after { content: ""; position: absolute; left: 1px; top: 6px; width: 1px; height: 3px; background: #222; }
.toc-x { margin: 0 4px 0 9px; font-weight: 700; }
.toc-bar { height: 25px; flex: none; display: flex; align-items: center; padding-left: 3px; }
.tree { flex: 1; width: 186px; background: #fff; border: 1px solid #a8a8a8; padding-top: 1px; }
.row { height: 16.800px; display: flex; align-items: center; padding-left: 25px; }
.root { padding-left: 7px; }
.exp { width: 9px; height: 9px; flex: none; border: 1px solid #9a9a9a; position: relative; background: #fff; }
.exp::after { content: ""; position: absolute; left: 1px; top: 3px; width: 5px; height: 1px; background: #666; }
.lay { width: 17px; height: 17px; margin-left: 3px; flex: none; }
.sel { background: #0a6cc4; color: #fff; font-weight: 700; padding: 0 2px; margin-left: 4px; height: 15px; line-height: 15px; }
.chk { width: 11px; height: 11px; margin: 0 7px 0 6px; flex: none; border: 1px solid #333; background: #fff; position: relative; }
.chk::after { content: ""; position: absolute; left: 3px; top: 0; width: 4px; height: 7px; border: solid #111; border-width: 0 1.500px 1.500px 0; transform: rotate(40deg); }
.sw { padding-left: 54px; }
.swatch { width: 14px; height: 11px; border: 1px solid #333; }
.c-a { background: #ffff00; }
.c-b { background: #55ff00; }
.c-c { background: #c500ff; }
.c-d { background: #ffaa00; }
.c-e { background: #00c3ff; }

.maparea { width: 1011px; flex: none; display: flex; flex-direction: column; }
.maptop { height: 583px; flex: none; display: flex; }
.frame { width: 996px; flex: none; background: #fff; border-left: 1px solid #7d7d7d; border-top: 2px solid #808080; }
.map { display: block; width: 995px; height: 581px; }
.shp polygon { stroke: #2e2e2e; stroke-width: 1; stroke-linejoin: round; }
.shp .a { fill: #ffff00; }
.shp .b { fill: #55ff00; }
.shp .c { fill: #c500ff; }
.shp .d { fill: #ffaa00; }
.shp .e { fill: #00c3ff; }
.shp .bl { fill: #00c3ff; stroke-width: .5; }
.lbl { font-family: "Liberation Sans", sans-serif; font-size: 9.500px; text-anchor: middle; fill: #2a2a2a; }
.lc { fill: #4a1060; }
.xy { font-family: "Liberation Sans", sans-serif; font-size: 7.500px; font-weight: 700; fill: #27507e; }
.qmark { font-family: "Liberation Sans", sans-serif; font-size: 15px; font-weight: 700; fill: #fff; }
.vscroll { width: 15px; flex: none; display: flex; flex-direction: column; align-items: center; background: #f0f0f0; border-top: 2px solid #b8b8b8; }
.arr-up, .arr-dn { width: 7px; height: 7px; margin: 7px 0 2px; border: solid #333; border-width: 2px 0 0 2px; transform: rotate(45deg); flex: none; }
.arr-dn { transform: rotate(225deg); margin: 5px 0; }
.vthumb { width: 13px; flex: 1; background: #cdcdcd; }

.mapbottom { height: 16px; flex: none; display: flex; align-items: center; background: #f0f0f0; padding-left: 1px; }
.vbtn { width: 16px; height: 15px; flex: none; display: flex; align-items: center; justify-content: center; }
.vbtn svg { width: 12px; height: 12px; }
.vbtn.on { background: #c4dcf2; }
.mapbottom .sep { height: 13px; margin: 0 2px 0 3px; }
.vbtn.wide { width: 17px; }
.arr-l, .arr-r { width: 7px; height: 7px; flex: none; border: solid #333; border-width: 2px 0 0 2px; transform: rotate(-45deg); margin: 0 3px 0 6px; }
.arr-r { transform: rotate(135deg); margin: 0 0 0 5px; }
.hthumb { width: 888px; height: 14px; flex: none; background: #cdcdcd; }

.righttabs { flex: 1; display: flex; flex-direction: column; padding: 3px 0 0 4px; }
.righttabs .sidetab { width: 17px; border-top: 1px solid #b0b0b0; border-left-color: #b0b0b0; border-right: 0; border-radius: 3px 0 0 3px; }
.r1 { height: 64px; }
.r2 { height: 62px; margin-top: 1px; }
.r3 { height: 106px; margin-top: 15px; }
.r3 .vtext, .r2 .vtext, .r1 .vtext { margin-top: 3px; }

.taskbar { height: 32px; flex: none; background: #0e0e0e; display: flex; align-items: stretch; }
.tb { width: 35px; flex: none; display: flex; align-items: center; justify-content: center; }
.tb:first-child { margin-left: -2px; }
.tb svg { width: 16px; height: 16px; }
.tb.active { background: #303030; border-bottom: 2px solid #f0c8a8; }
.tb.running { position: relative; }
.tb.running::after { content: ""; position: absolute; left: 3px; right: 3px; bottom: 0; height: 2px; background: #f0c8a8; }
.tray { margin-left: auto; display: flex; align-items: center; }
.t-help { width: 21px; height: 21px; margin-right: 6px; }
.t-up { width: 8px; height: 8px; border: solid #eee; border-width: 1.500px 0 0 1.500px; transform: rotate(45deg); margin: 4px 10px 0 5px; }
.t-i { width: 16px; height: 16px; margin-right: 6px; }
.t-n { width: 17px; height: 17px; margin: 0 19px 0 9px; }
.t-edge { width: 1px; height: 32px; background: #555; margin-right: 2px; }
```
